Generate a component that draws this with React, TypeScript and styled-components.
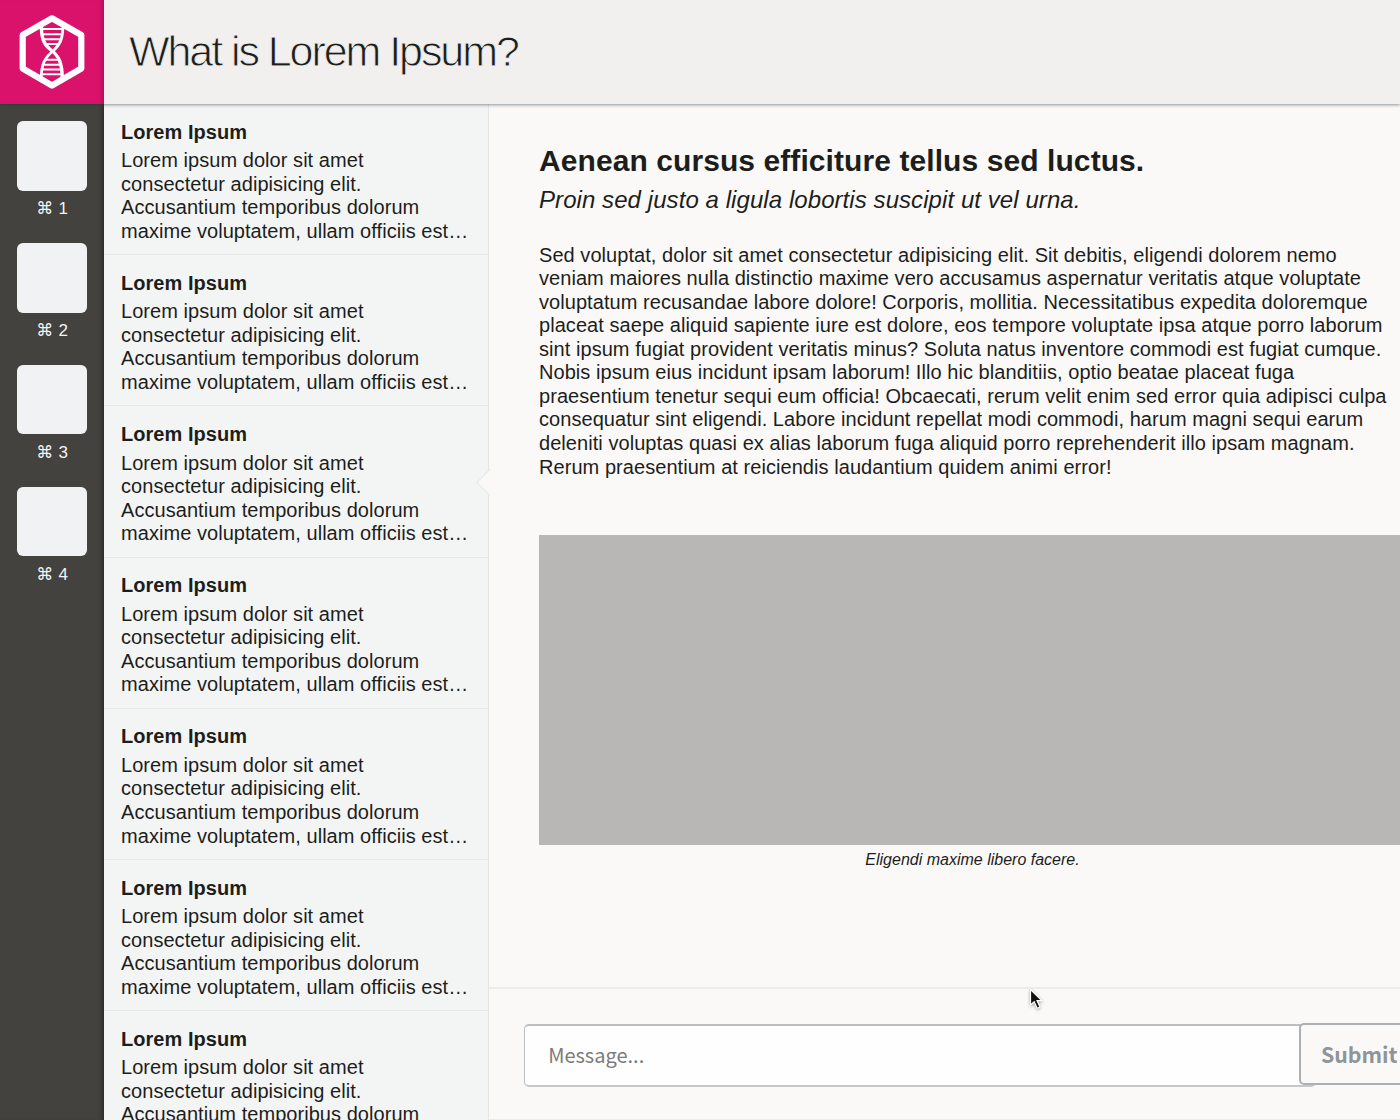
import React from "react";
import styled, { createGlobalStyle } from "styled-components";

const sans = `"Liberation Sans", Arial, Helvetica, sans-serif`;
const humanist = `"Noto Sans CJK SC", "Noto Sans", sans-serif`;

const GlobalStyle = createGlobalStyle`
  *, *::before, *::after { box-sizing: border-box; }
  body { margin: 0; overflow: hidden; background: #faf9f8; }
`;

const Shell = styled.div`
  display: flex;
  flex-direction: column;
  width: 1400px;
  height: 1120px;
  overflow: hidden;
  background: #faf9f8;
  color: #1d1e1c;
  font-family: ${sans};
`;

const Header = styled.header`
  position: relative;
  z-index: 2;
  flex: none;
  display: flex;
  height: 104px;
  background: #f1f0ee;
  box-shadow: 0 1px 3px rgba(40, 50, 60, 0.5);
`;

const Brand = styled.div`
  display: grid;
  place-items: center;
  width: 104px;
  background: #db126b;
  box-shadow: inset -5px 0 4px -3px rgba(80, 0, 40, 0.3);
`;

const Title = styled.h1`
  margin: 0;
  padding: 0 0 0 25px;
  line-height: 102px;
  font-size: 43px;
  font-weight: 400;
  letter-spacing: -2.07px;
  white-space: nowrap;
  color: #1d1e1c;
  -webkit-text-stroke: 0.9px #f1f0ee;
`;

const Body = styled.div`
  flex: 1;
  min-height: 0;
  display: flex;
`;

const Rail = styled.nav`
  flex: none;
  display: flex;
  flex-direction: column;
  align-items: center;
  width: 104px;
  padding-top: 17.2px;
  background: #43423f;
  box-shadow: inset -5px 0 4px -3px rgba(0, 0, 0, 0.35);
`;

const Slot = styled.div`
  display: flex;
  flex-direction: column;
  align-items: center;
  height: 121.9px;
`;

const Tile = styled.div`
  width: 70px;
  height: 69.5px;
  border-radius: 6px;
  background: #f1f2f4;
`;

const Shortcut = styled.span`
  margin-top: 7.7px;
  line-height: 22px;
  font-size: 17px;
  font-family: "Liberation Sans", "DejaVu Sans", sans-serif;
  word-spacing: 0.5px;
  white-space: pre;
  color: #f3f3f3;
`;

const List = styled.aside`
  flex: none;
  width: 385px;
  overflow: hidden;
  background: #f3f5f5;
  border-right: 1px solid #e4e5e5;
`;

const Item = styled.article`
  height: 151.2px;
  padding: 16.6px 0 0 17px;
  border-bottom: 1.5px solid #e6e8e8;
`;

const ItemTitle = styled.h2`
  margin: 0 0 5.1px;
  font-size: 20px;
  line-height: 23.5px;
  font-weight: 700;
  letter-spacing: 0.05px;
`;

const ItemText = styled.p`
  margin: 0;
  font-size: 20px;
  line-height: 23.55px;
  letter-spacing: 0.05px;
  white-space: nowrap;
`;

const Main = styled.main`
  position: relative;
  flex: 1;
  min-width: 0;
  display: flex;
  flex-direction: column;
`;

const Pointer = styled.i`
  position: absolute;
  left: -9.5px;
  top: 368.5px;
  width: 19px;
  height: 19px;
  background: #faf9f8;
  border: 1px solid #e4e5e5;
  border-width: 0 0 1px 1px;
  transform: rotate(45deg);
`;

const Article = styled.section`
  flex: none;
  width: 917px;
  height: 883px;
  padding: 38px 0 0 50px;
`;

const Headline = styled.h2`
  margin: 0;
  font-size: 30px;
  line-height: 38px;
  letter-spacing: 0.08px;
  white-space: nowrap;
`;

const Tagline = styled.p`
  margin: 1px 0 0;
  font-size: 24px;
  line-height: 38px;
  font-style: italic;
  letter-spacing: 0.07px;
  white-space: nowrap;
`;

const Copy = styled.p`
  margin: 24.6px 0 0;
  font-size: 20px;
  line-height: 23.55px;
  letter-spacing: 0.055px;
  white-space: nowrap;
`;

const Figure = styled.figure`
  margin: 55.9px 0 0;
  text-align: center;
`;

const Picture = styled.div`
  height: 310px;
  background: #b8b7b5;
`;

const Caption = styled.figcaption`
  margin-top: 4px;
  font-size: 16px;
  line-height: 22px;
  font-style: italic;
`;

const Composer = styled.form`
  flex: 1;
  display: flex;
  align-items: flex-start;
  padding: 35px 0 0 35px;
  border-top: 2px solid #ececea;
  border-bottom: 1px solid #ececea;
`;

const MessageField = styled.input`
  flex: none;
  width: 792px;
  height: 62.5px;
  padding: 0 23.2px 1px;
  border: 2px solid #bdbec0;
  border-left-width: 1px;
  border-bottom-color: #c6c7c8;
  border-radius: 5px;
  background: #fefefe;
  font-family: ${humanist};
  font-size: 20px;
  outline: none;
  &::placeholder { color: #7b7b7b; opacity: 1; }
`;

const Submit = styled.button`
  flex: none;
  width: 120px;
  height: 62px;
  margin: -1px 0 0 -17px;
  padding: 0 0 1px 20px;
  border: 2px solid #adb0b2;
  border-radius: 5px;
  background: #faf9f8;
  color: #8f9498;
  font-family: ${humanist};
  font-size: 21.3px;
  font-weight: 700;
  text-align: left;
`;

const Cursor = styled.svg`
  position: absolute;
  left: 539px;
  top: 883px;
  filter: drop-shadow(0 1px 1.5px rgba(0, 0, 0, 0.35));
`;

const Logo = () => (
  <svg width="104" height="104" viewBox="0 0 104 104" fill="none" stroke="#fff">
    <path d="M52 18.300 L81.300 35 V68.500 L52 85.500 L22.700 68.500 V35 Z" strokeWidth="6.200" strokeLinejoin="round" />
    <path d="M41.300 24 C41.300 38 43.500 44.500 51 50 C59 56 62.300 63 62.300 80" strokeWidth="3.400" />
    <path d="M63 24 C63 37 61 43.500 54 50 C45 57.500 41.300 63 41 80" strokeWidth="2.800" />
    <path d="M42 29H62 M42.500 34.200H62 M44 39.200H60.500 M46.500 44H58 M46 59.800H58 M43.500 64.700H60.500 M42 69.500H61 M41.500 74.300H62" strokeWidth="2" />
  </svg>
);

const items = Array.from({ length: 7 }, (_, i) => i);

const copy = [
  "Sed voluptat, dolor sit amet consectetur adipisicing elit. Sit debitis, eligendi dolorem nemo",
  "veniam maiores nulla distinctio maxime vero accusamus aspernatur veritatis atque voluptate",
  "voluptatum recusandae labore dolore! Corporis, mollitia. Necessitatibus expedita doloremque",
  "placeat saepe aliquid sapiente iure est dolore, eos tempore voluptate ipsa atque porro laborum",
  "sint ipsum fugiat provident veritatis minus? Soluta natus inventore commodi est fugiat cumque.",
  "Nobis ipsum eius incidunt ipsam laborum! Illo hic blanditiis, optio beatae placeat fuga",
  "praesentium tenetur sequi eum officia! Obcaecati, rerum velit enim sed error quia adipisci culpa",
  "consequatur sint eligendi. Labore incidunt repellat modi commodi, harum magni sequi earum",
  "deleniti voluptas quasi ex alias laborum fuga aliquid porro reprehenderit illo ipsam magnam.",
  "Rerum praesentium at reiciendis laudantium quidem animi error!",
];

export default function App() {
  return (
    <Shell>
      <GlobalStyle />
      <Header>
        <Brand><Logo /></Brand>
        <Title>What is Lorem Ipsum?</Title>
      </Header>
      <Body>
        <Rail>
          {[1, 2, 3, 4].map((n) => (
            <Slot key={n}>
              <Tile />
              <Shortcut>{`⌘ ${n}`}</Shortcut>
            </Slot>
          ))}
        </Rail>
        <List>
          {items.map((i) => (
            <Item key={i}>
              <ItemTitle>Lorem Ipsum</ItemTitle>
              <ItemText>
                Lorem ipsum dolor sit amet<br />
                consectetur adipisicing elit.<br />
                Accusantium temporibus dolorum<br />
                maxime voluptatem, ullam officiis est…
              </ItemText>
            </Item>
          ))}
        </List>
        <Main>
          <Pointer />
          <Article>
            <Headline>Aenean cursus efficiture tellus sed luctus.</Headline>
            <Tagline>Proin sed justo a ligula lobortis suscipit ut vel urna.</Tagline>
            <Copy>
              {copy.map((line) => (
                <React.Fragment key={line}>{line}<br /></React.Fragment>
              ))}
            </Copy>
            <Figure>
              <Picture />
              <Caption>Eligendi maxime libero facere.</Caption>
            </Figure>
          </Article>
          <Composer>
            <MessageField placeholder="Message..." />
            <Submit type="button">Submit</Submit>
          </Composer>
          <Cursor width="20" height="28" viewBox="0 0 20 28">
            <path d="M2.500 2.500 V18 L6.200 14.700 L9.200 21.300 L12 20 L9 13.600 H13.800 Z" fill="#111" stroke="#fff" strokeWidth="1.200" />
          </Cursor>
        </Main>
      </Body>
    </Shell>
  );
}
